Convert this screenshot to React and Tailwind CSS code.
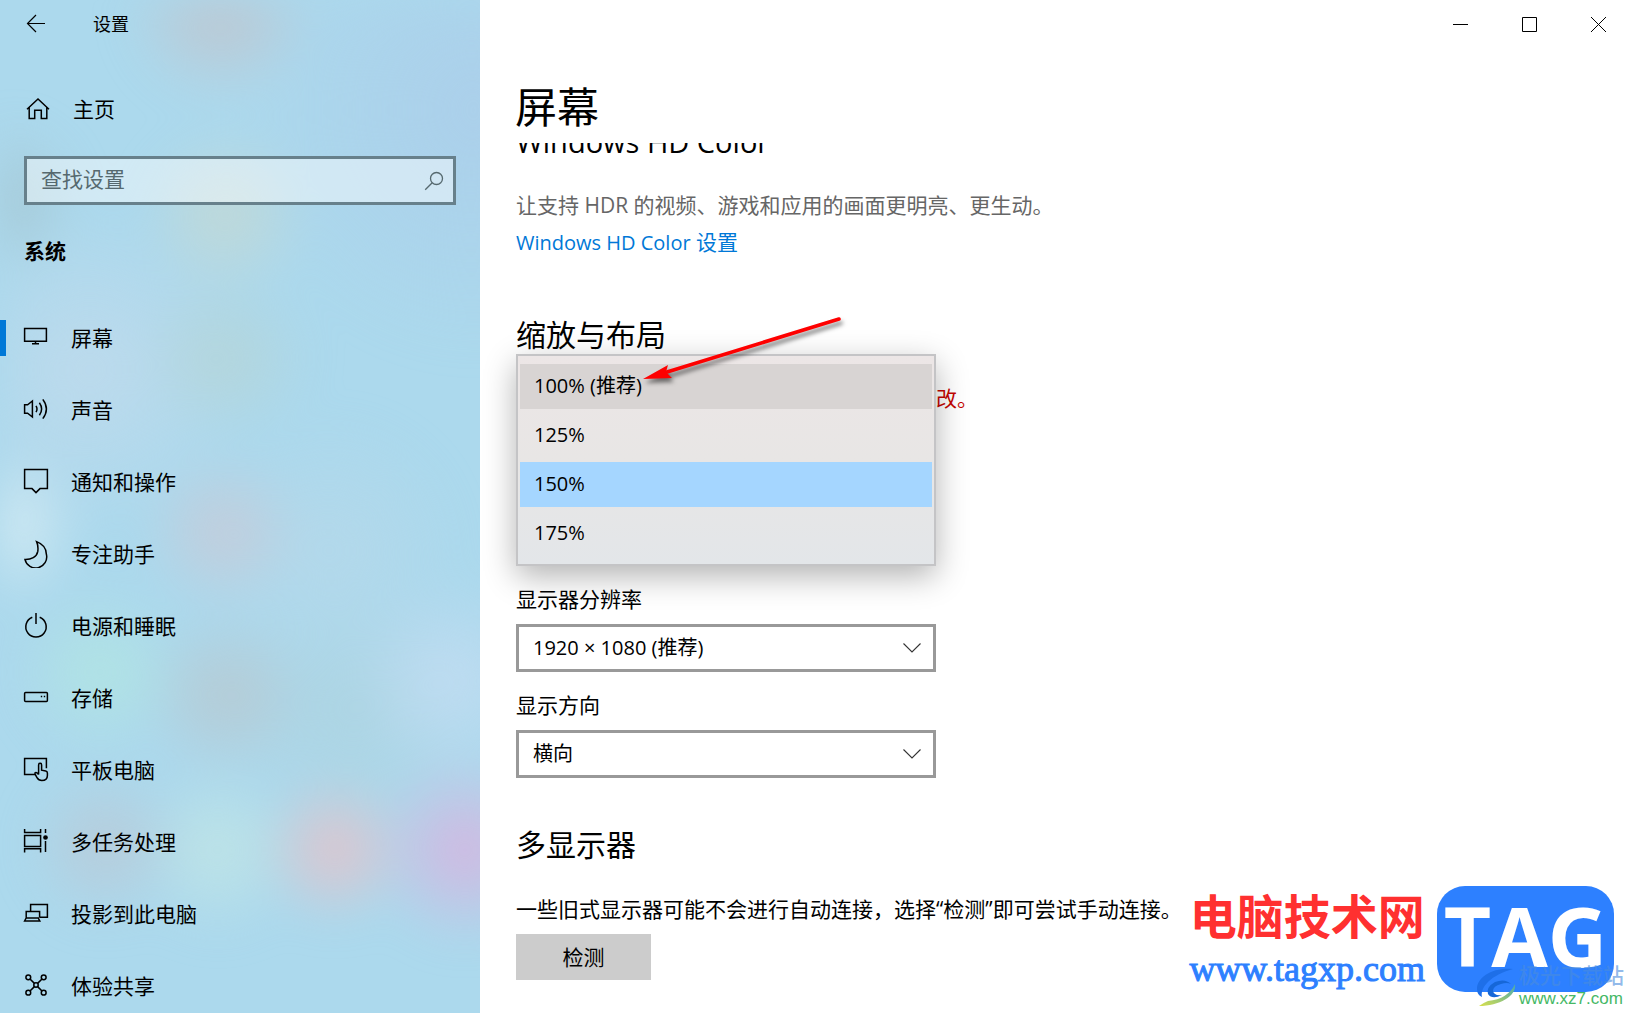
import React, { useState } from 'react'

const ICONS = {
  home: <path d="M3 14.2 14 4l11 10.2M5.2 12.5v10.9h5.5v-8.2h6.6v8.2h5.5V12.5" />,
  display: <path d="M2.6 4.6h21.8v12.6H2.6zM13.5 17.2v2.4M10 19.8h7" />,
  sound: (
    <path d="M2.6 8.8h3L10.4 5v16l-4.8-3.8h-3zM14 9.8q2 3.2 0 6.4M17.400 6.800q4.400 6.200 0 12.400M20.800 3.400q7.200 9.600 0 19.200" />
  ),
  message: <path d="M2.6 1.6h22.8v19H18l-4 4-4-4H2.6z" />,
  moon: <path d="M14.6 1.6C21 4 24.4 8.6 24.4 14.4A10.8 10.8 0 0 1 3 19.6C9 19.8 14.8 17 15.8 11.4Q16.5 6 14.6 1.6z" />,
  power: <path d="M10.3 5.3a10.2 10.2 0 1 0 7.4 0M14 1v11" />,
  storage: (
    <>
      <rect x="2.6" y="8.6" width="22.8" height="8.8" rx="1" />
      <path d="M18.8 12.4h1.4M21.8 12.4h1.4" />
    </>
  ),
  tablet: (
    <>
      <path d="M13 18.4H2.6V2.6h21.8v9.6" />
      <path d="M16.6 18.6V9q0-1.700 1.500-1.700T19.600 9v5.200l4.200.9q1.600.4 1.600 2v2.400q0 5-5.600 5-3.200 0-4.800-2.800l-1.800-3.300q-.7-2 .8-2 1.600.2 2.600 2.200" />
    </>
  ),
  multitask: (
    <>
      <path d="M2.6 1v3.6h16V1M2.6 7.6h16v10.8h-16zM2.6 24.4v-3.6h16v3.6M23.5 1v4M23.5 13v11" />
      <circle cx="23.5" cy="9.5" r="1.6" fill="currentColor" />
    </>
  ),
  project: <path d="M8.6 11V4.6h16.8v12.6H18M4.2 17.8v-6.2h13.4v6.2M4.2 18h12l1.6 3H2.6z" />,
  share: (
    <>
      <circle cx="14" cy="13" r="2.2" />
      <circle cx="6.3" cy="5.3" r="2.4" />
      <circle cx="21.7" cy="5.3" r="2.4" />
      <circle cx="6.3" cy="20.7" r="2.4" />
      <circle cx="21.7" cy="20.7" r="2.4" />
      <path d="m8 7 4.4 4.4M20 7l-4.4 4.4M8 19l4.4-4.4M20 19l-4.4-4.4" />
    </>
  ),
}

function Icon({ name }) {
  return (
    <svg viewBox="0 0 28 28" className="size-7 shrink-0" fill="none" stroke="currentColor" strokeWidth="1.5" aria-hidden="true">
      {ICONS[name]}
    </svg>
  )
}

const NAV = [
  { icon: 'display', label: '屏幕' },
  { icon: 'sound', label: '声音' },
  { icon: 'message', label: '通知和操作' },
  { icon: 'moon', label: '专注助手' },
  { icon: 'power', label: '电源和睡眠' },
  { icon: 'storage', label: '存储' },
  { icon: 'tablet', label: '平板电脑' },
  { icon: 'multitask', label: '多任务处理' },
  { icon: 'project', label: '投影到此电脑' },
  { icon: 'share', label: '体验共享' },
]

const SCALES = ['100% (推荐)', '125%', '150%', '175%']

// Fondo acrílico: manchas de color difuminadas detrás del menú
function AcrylicBackdrop() {
  return (
    <div className="absolute inset-y-0 -right-10 left-0 bg-[radial-gradient(circle_at_220px_8px,#bfc5ce_0px,#bfc5ce00_95px),radial-gradient(circle_at_225px_215px,#c1d8d6_0px,#c1d8d600_85px),radial-gradient(circle_at_0px_200px,#a4c6d2_0px,#a4c6d200_80px),radial-gradient(circle_at_225px_358px,#b4d5da_0px,#b4d5da00_85px),radial-gradient(circle_at_90px_370px,#bddaec_0px,#bddaec00_160px),radial-gradient(circle_at_0px_525px,#d8edf4_0px,#d8edf400_85px),radial-gradient(circle_at_222px_532px,#c4ccda_0px,#c4ccda00_80px),radial-gradient(circle_at_100px_672px,#b1e4e3_0px,#b1e4e300_85px),radial-gradient(circle_at_225px_695px,#b6cad3_0px,#b6cad300_85px),radial-gradient(circle_at_450px_680px,#c0dcf1_0px,#c0dcf100_100px),radial-gradient(circle_at_335px_850px,#e2c3cb_0px,#e2c3cb00_75px),radial-gradient(circle_at_465px_850px,#d4b6e0_0px,#d4b6e000_95px),radial-gradient(circle_at_105px_845px,#b8cbd9_0px,#b8cbd900_80px),radial-gradient(circle_at_218px_850px,#bfe4e6_0px,#bfe4e600_85px),radial-gradient(circle_at_480px_110px,#abcfea_0px,#abcfea00_240px),radial-gradient(circle_at_330px_550px,#b3d8ea_0px,#b3d8ea00_130px),radial-gradient(circle_at_350px_710px,#add4e2_0px,#add4e200_130px)] blur-[20px]" />
  )
}

function Sidebar() {
  const [active, setActive] = useState('屏幕')

  return (
    <aside className="relative w-[480px] shrink-0 overflow-hidden bg-[#acd9ed]">
      <AcrylicBackdrop />
      <div className="relative">
        <div className="flex h-12 items-center gap-[47px] pl-[26px]">
          <button type="button" aria-label="返回">
            <svg viewBox="0 0 20 20" className="size-5" fill="none" stroke="currentColor" strokeWidth="1.2" aria-hidden="true">
              <path d="M19 9.5H1.5M10 1 1.5 9.5 10 18" />
            </svg>
          </button>
          <span className="text-[18px]">设置</span>
        </div>

        <a href="#home" className="mt-[37px] flex h-12 items-center gap-[21px] pl-6">
          <Icon name="home" />
          <span className="pt-0.5">主页</span>
        </a>

        <label className="mx-6 mt-[23px] flex h-[49px] items-center border-3 border-[#67808b] bg-white/45 pr-2 pl-3.5">
          <input
            type="text"
            placeholder="查找设置"
            aria-label="查找设置"
            className="min-w-0 flex-1 bg-transparent pb-0.5 outline-none placeholder:text-[#56696f]"
          />
          <svg viewBox="0 0 22 22" className="size-[22px]" fill="none" stroke="#56696f" strokeWidth="1.3" aria-hidden="true">
            <circle cx="13.5" cy="8.5" r="6" />
            <path d="m9.2 12.8-7 7" />
          </svg>
        </label>

        <h2 className="mt-[30px] pl-6 leading-8 font-bold">系统</h2>

        <nav className="mt-[35px]">
          {NAV.map(item => (
            <a
              key={item.label}
              href={`#${item.icon}`}
              onClick={() => setActive(item.label)}
              className="flex h-[72px] items-center"
            >
              <span className={active === item.label ? 'h-9 w-1.5 bg-[#0078d7]' : 'h-9 w-1.5'} />
              <span className="flex items-center gap-[21px] pl-4">
                <Icon name={item.icon} />
                <span className="pt-0.5">{item.label}</span>
              </span>
            </a>
          ))}
        </nav>
      </div>
    </aside>
  )
}

function WindowControls() {
  return (
    <div className="flex h-12 shrink-0 justify-end pr-px">
      <button type="button" aria-label="最小化" className="flex w-[69px] items-center justify-center">
        <svg viewBox="0 0 15 15" className="size-[15px]" stroke="#000" aria-hidden="true">
          <path d="M0 7.5h15" />
        </svg>
      </button>
      <button type="button" aria-label="最大化" className="flex w-[69px] items-center justify-center">
        <svg viewBox="0 0 15 15" className="size-[15px]" fill="none" stroke="#000" aria-hidden="true">
          <path d="M.5.5h14v14H.5z" />
        </svg>
      </button>
      <button type="button" aria-label="关闭" className="flex w-[69px] items-center justify-center">
        <svg viewBox="0 0 15 15" className="size-[15px]" stroke="#000" aria-hidden="true">
          <path d="m0 0 15 15M15 0 0 15" />
        </svg>
      </button>
    </div>
  )
}

function SelectField({ id, label, options }) {
  return (
    <div className="w-[420px]">
      <label htmlFor={id} className="block leading-8">{label}</label>
      <div className="relative mt-[9px]">
        <select id={id} className="h-12 w-full appearance-none border-3 border-[#999] bg-white pl-3.5 text-xl">
          {options.map(o => <option key={o}>{o}</option>)}
        </select>
        <svg viewBox="0 0 18 10" className="pointer-events-none absolute top-[19px] right-[15px] h-2.5 w-[18px]" fill="none" stroke="#333" strokeWidth="1.1" aria-hidden="true">
          <path d="m.5.5 8.5 8.5L17.5.5" />
        </svg>
      </div>
    </div>
  )
}

function ScaleMenu() {
  const [selected, setSelected] = useState('150%')

  const rowColor = scale => {
    if (scale === selected) return 'bg-[#a5d6ff]'
    if (scale === SCALES[0]) return 'bg-[#d8d4d3]'
    return 'bg-transparent'
  }

  return (
    <div className="absolute -top-px left-0 z-10 w-[420px] border-2 border-[#c4c4c6] bg-linear-to-b from-[#ece6e6] via-[#e8e6e5] to-[#e3e6e9] px-0.5 py-2 text-xl shadow-[0_10px_30px_rgba(0,0,0,0.3)]">
      <ul role="listbox" aria-label="缩放" className="flex flex-col gap-1">
        {SCALES.map(scale => (
          <li
            key={scale}
            role="option"
            aria-selected={scale === selected}
            onClick={() => setSelected(scale)}
            className={`flex h-[45px] items-center pb-0.5 pl-3.5 ${rowColor(scale)}`}
          >
            {scale}
          </li>
        ))}
      </ul>

      {/* Flecha roja */}
      <svg viewBox="0 0 212 80" className="pointer-events-none absolute -top-[50px] left-[117px] h-20 w-[212px] drop-shadow-[2px_4px_2px_rgba(0,0,0,0.5)]" aria-hidden="true">
        <path d="M204 13 32 66" stroke="#fe0000" strokeWidth="3.6" strokeLinecap="round" />
        <path d="m8 73 25-14-2 7 6 6z" fill="#fe0000" />
      </svg>
    </div>
  )
}

function Watermark() {
  return (
    <div className="pointer-events-none absolute right-0 bottom-0 z-20 flex pr-5 pb-[21px]">
      <div className="mr-3 flex flex-col items-center">
        <span className="text-[47px] leading-[60px] font-bold text-[#ff3030]">电脑技术网</span>
        <span className="font-['Liberation_Serif',serif] text-[36px] leading-[46px] text-[#2d80ff] [-webkit-text-stroke:1px_#2d80ff]">www.tagxp.com</span>
      </div>
      <div className="flex h-[106px] w-[177px] items-center justify-center rounded-[28px] bg-[#2d80ff] pb-2 text-[82px] leading-none font-bold text-white">
        TAG
      </div>
      <div className="absolute right-2.5 bottom-1.5 flex items-end gap-0.5">
        <svg viewBox="0 0 42 40" className="h-10 w-[42px]" aria-hidden="true">
          <defs>
            <linearGradient id="swirl" x1="0" y1="1" x2="1" y2="0">
              <stop offset="0" stopColor="#d8e04c" />
              <stop offset="1" stopColor="#48a8b0" />
            </linearGradient>
          </defs>
          <path d="M38 2C18 0 2 10 2 22q0 6 5 8C5 20 16 8 38 2z" fill="#1e6fe8" />
          <path d="M36 17q-6-6-16-2-9 5-7 12 4 6 14 1-8 1-9-4 0-5 8-7 6-2 10 0z" fill="#1667d8" />
          <path d="M40 17c2 12-16 22-36 22q4-3 9-5 20-2 27-17z" fill="url(#swirl)" />
        </svg>
        <div className="flex flex-col">
          <span className="text-[21px] leading-8 font-medium text-[#4a8cdc]/60">极光下载站</span>
          <span className="font-['Liberation_Sans',sans-serif] text-[17px] leading-4 text-[#45b865]">www.xz7.com</span>
        </div>
      </div>
    </div>
  )
}

export default function App() {
  return (
    <div className="flex h-screen overflow-hidden bg-white font-['Open_Sans','Noto_Sans_CJK_SC',sans-serif] text-[21px] text-black">
      <Sidebar />

      <main className="relative flex min-w-0 flex-1 flex-col">
        <WindowControls />
        <h1 className="mt-[23px] shrink-0 pl-[35px] text-[42px] leading-[72px]">屏幕</h1>

        <div className="min-h-0 flex-1 overflow-hidden pl-9">
          <h2 className="-mt-[21px] text-[29px] leading-10">Windows HD Color</h2>
          <p className="mt-[25px] leading-9 text-[#666]">让支持 HDR 的视频、游戏和应用的画面更明亮、更生动。</p>
          <a href="#hdcolor" className="mt-px block leading-9 text-[#0078d7]">
            <span className="text-xl">Windows HD Color</span> 设置
          </a>

          <h2 className="mt-[55px] text-[30px] leading-10">缩放与布局</h2>
          <div className="relative h-[228px] pt-[27px]">
            <p className="pl-[420px] leading-8 text-[#c50500]">改。</p>
            <ScaleMenu />
          </div>

          <SelectField id="resolution" label="显示器分辨率" options={['1920 × 1080 (推荐)']} />
          <div className="h-[17px]" />
          <SelectField id="orientation" label="显示方向" options={['横向']} />

          <h2 className="mt-[47px] text-[30px] leading-10">多显示器</h2>
          <p className="mt-7 leading-8">一些旧式显示器可能不会进行自动连接，选择“检测”即可尝试手动连接。</p>
          <button type="button" className="mt-[9px] h-[46px] w-[135px] bg-[#ccc] pt-0.5">检测</button>
        </div>

        <Watermark />
      </main>
    </div>
  )
}
